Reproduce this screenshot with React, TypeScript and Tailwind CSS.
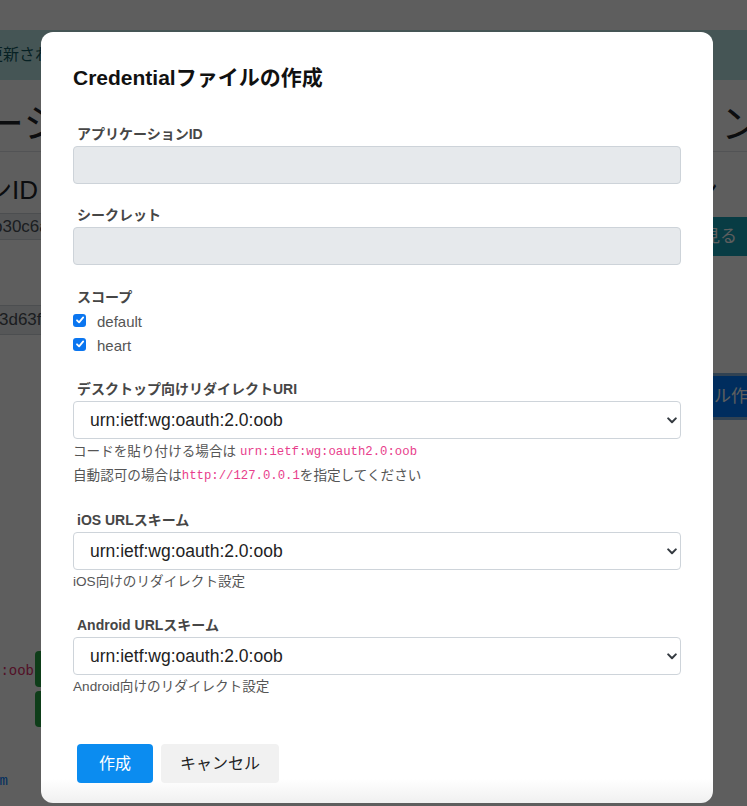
import React from "react";

const sans = "font-['Liberation_Sans','Noto_Sans_CJK_JP',sans-serif]";
const mono = "font-['Liberation_Mono','Noto_Sans_CJK_JP',monospace]";

function Chevron() {
  return (
    <svg width="10" height="7" viewBox="0 0 10 7" className="shrink-0">
      <path d="M1.2 1.4 L5 5.2 L8.8 1.4" fill="none" stroke="#343a40" strokeWidth="2" strokeLinecap="round" strokeLinejoin="round" />
    </svg>
  );
}

function Check() {
  return (
    <div className="w-[13px] h-[13px] rounded-[3px] bg-[#0b76f0] flex items-center justify-center shrink-0">
      <svg width="10" height="10" viewBox="0 0 10 10">
        <path d="M2 5.3 L4.1 7.4 L8.2 2.4" fill="none" stroke="white" strokeWidth="1.8" strokeLinecap="round" strokeLinejoin="round" />
      </svg>
    </div>
  );
}

function Label({ children }: { children: React.ReactNode }) {
  return <div className="pl-1 h-[21px] text-[14px] leading-[21px] font-bold text-[#464646] mb-px">{children}</div>;
}

function SelectBox({ value }: { value: string }) {
  return (
    <div className="h-[38px] border border-[#ced4da] rounded-[4px] bg-white flex items-center justify-between pl-4 pr-[3px] text-[17.5px] text-[#222]">
      <span>{value}</span>
      <Chevron />
    </div>
  );
}

function Help({ children }: { children: React.ReactNode }) {
  return <div className="h-6 flex items-center text-[13.6px] leading-[24px] text-[#555] whitespace-nowrap">{children}</div>;
}

function Code({ children }: { children: React.ReactNode }) {
  return <code className={`${mono} text-[12.3px] leading-none text-[#e83e8c]`}>{children}</code>;
}

export default function App() {
  return (
    <div className={`relative w-[747px] h-[806px] overflow-hidden bg-white ${sans}`}>
      {/* underlying page */}
      <div className="w-full">
        <div className="h-[30px]" />
        <div className="h-[50px] bg-[#bae6e6] flex items-center text-[16px] text-[#155a62] whitespace-nowrap">
          <span className="-ml-[13px]">更新されました</span>
        </div>
        <div className="mt-[16px] h-[56px] flex justify-between text-[40px] leading-[56px] text-[#212529] border-b border-[#dee2e6] whitespace-nowrap">
          <span className="-ml-[16px]">ーシ</span>
          <span className="-mr-[14px]">ン</span>
        </div>
        <div className="mt-[18px] h-[40px] flex justify-between text-[26px] leading-[40px] text-[#212529] whitespace-nowrap">
          <span className="-ml-[14px]">ンID</span>
          <span className="w-[55px]">ン</span>
        </div>
        <div className="mt-[3px] flex justify-between items-start">
          <div className="-ml-[7px] w-[70px] h-[27px] bg-[#e9ecef] border-y border-[#ced4da] flex items-center text-[17px] text-[#495057] whitespace-nowrap overflow-hidden">
            b30c6ab
          </div>
          <div className="mt-[4px] h-[39px] w-[90px] bg-[#17a2b8] text-white text-[17px] flex items-center justify-end pr-[10px] rounded-l-[4px] whitespace-nowrap">
            詳細を見る
          </div>
        </div>
        <div className="mt-[49px] -ml-[1px] w-[70px] h-[30px] bg-[#e9ecef] border-y border-[#ced4da] flex items-center text-[17px] text-[#495057] whitespace-nowrap overflow-hidden">
          3d63fa1
        </div>
        <div className="mt-[41px] flex justify-end">
          <div className="-mr-[40px] w-[140px] h-[41px] bg-[#007bff] shadow-[0_0_0_3px_rgba(120,170,220,0.9)] text-white text-[17px] flex items-center justify-end pr-[22px] rounded-[4px] whitespace-nowrap">
            ファイル作成
          </div>
        </div>
        <div className="mt-[234px] flex items-start">
          <div className="w-[34px] flex justify-end pt-[10px] whitespace-nowrap">
            <span className={`${mono} text-[14px] leading-[20px] text-[#e0306a]`}>oauth2.0:oob</span>
          </div>
          <div className="ml-[1px] flex flex-col gap-[4px]">
            <div className="w-[80px] h-[36px] rounded-[4px] bg-[#28a745]" />
            <div className="w-[80px] h-[36px] rounded-[4px] bg-[#28a745]" />
          </div>
        </div>
        <div className="mt-[44px] w-[8px] flex justify-end whitespace-nowrap">
          <span className={`${mono} text-[14px] leading-[20px] text-[#007bff]`}>example.com</span>
        </div>
      </div>

      {/* backdrop */}
      <div className="absolute inset-0 bg-black/[0.63]" />

      {/* modal */}
      <div className="absolute left-[41px] top-[32px] w-[672px] h-[771px] rounded-[12px] bg-[linear-gradient(to_bottom,#ffffff_calc(100%-24px),#f0f0f0)] px-8 pt-8 pb-5 flex flex-col">
        <div className="h-[28px] leading-[28px] text-[21px] font-bold text-[#111]">Credentialファイルの作成</div>

        <div className="mt-8">
          <Label>アプリケーションID</Label>
          <div className="h-[38px] bg-[#e6e9ec] border border-[#cdd3d9] rounded-[4px]" />
        </div>

        <div className="mt-[21px]">
          <Label>シークレット</Label>
          <div className="h-[38px] bg-[#e6e9ec] border border-[#cdd3d9] rounded-[4px]" />
        </div>

        <div className="mt-[22px]">
          <div className="pl-1 h-[21px] text-[14px] leading-[21px] font-bold text-[#464646]">スコープ</div>
          {["default", "heart"].map((s) => (
            <div key={s} className="h-6 flex items-center gap-[11px]">
              <Check />
              <span className="text-[15px] text-[#555] leading-6 pt-[3px]">{s}</span>
            </div>
          ))}
        </div>

        <div className="mt-[23px]">
          <Label>デスクトップ向けリダイレクトURI</Label>
          <SelectBox value="urn:ietf:wg:oauth:2.0:oob" />
          <div className="mt-px">
            <Help>
              コードを貼り付ける場合は&nbsp;<Code>urn:ietf:wg:oauth2.0:oob</Code>
            </Help>
            <Help>
              自動認可の場合は<Code>http://127.0.0.1</Code>を指定してください
            </Help>
          </div>
        </div>

        <div className="mt-[22px]">
          <Label>iOS URLスキーム</Label>
          <SelectBox value="urn:ietf:wg:oauth:2.0:oob" />
          <Help>iOS向けのリダイレクト設定</Help>
        </div>

        <div className="mt-[21px]">
          <Label>Android URLスキーム</Label>
          <SelectBox value="urn:ietf:wg:oauth:2.0:oob" />
          <Help>Android向けのリダイレクト設定</Help>
        </div>

        <div className="mt-[45px] pl-1 flex gap-2">
          <div className="w-[76px] h-[39px] rounded-[4px] bg-[#0b8cf0] text-white text-[16px] flex items-center justify-center">作成</div>
          <div className="w-[118px] h-[39px] rounded-[4px] bg-[#f1f1f1] text-[#222] text-[16px] flex items-center justify-center">キャンセル</div>
        </div>
      </div>
    </div>
  );
}
